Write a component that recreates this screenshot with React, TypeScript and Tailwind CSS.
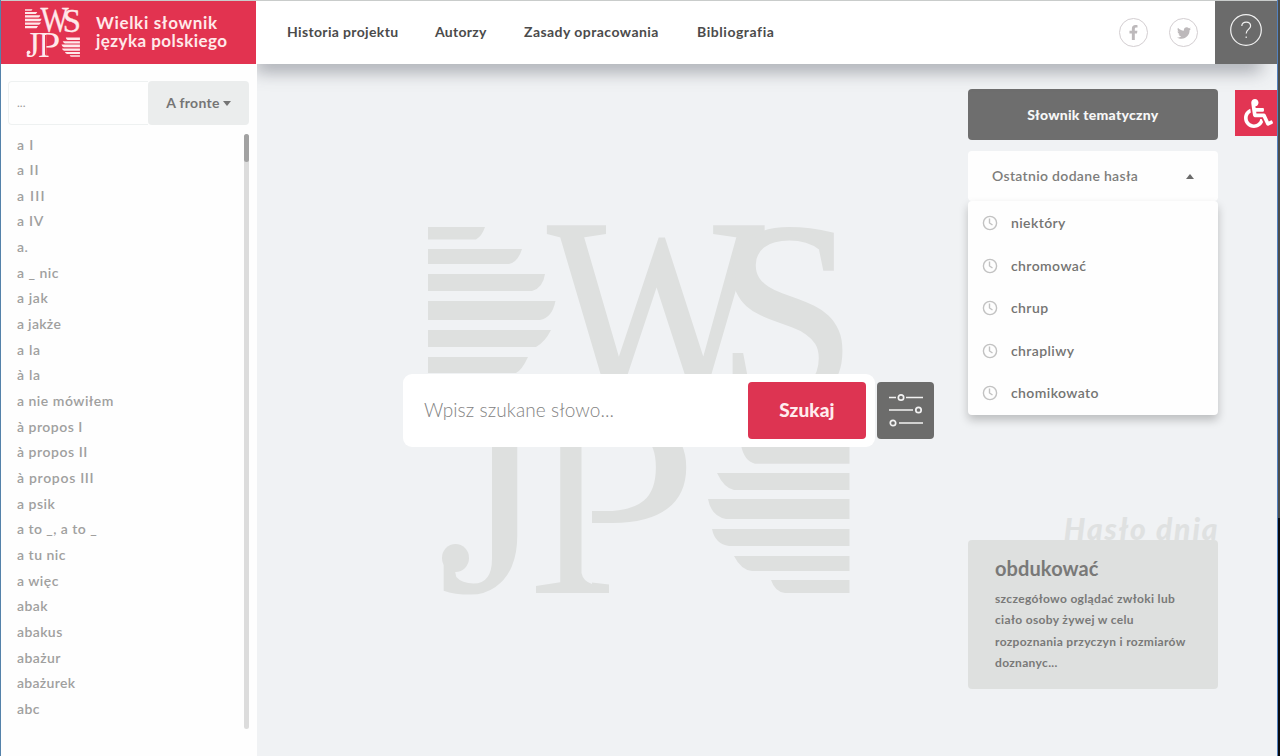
import React from "react";
import { FaWheelchair, FaFacebookF, FaTwitter } from "react-icons/fa";

const entries: [string, string][] = [
  ["a I", "tracking-[0.9px]"],
  ["a II", "tracking-[1px]"],
  ["a III", "tracking-[1.200px]"],
  ["a IV", "tracking-[0.7px]"],
  ["a.", "tracking-[0.5px]"],
  ["a _ nic", "tracking-[0.5px]"],
  ["a jak", "tracking-[0.6px]"],
  ["a jakże", "tracking-[0.3px]"],
  ["a la", "tracking-[0.7px]"],
  ["à la", "tracking-[0.7px]"],
  ["a nie mówiłem", "tracking-[0.5px]"],
  ["à propos I", "tracking-[0.5px]"],
  ["à propos II", "tracking-[0.55px]"],
  ["à propos III", "tracking-[0.7px]"],
  ["a psik", "tracking-[0.5px]"],
  ["a to _, a to _", "tracking-[0.45px]"],
  ["a tu nic", "tracking-[0.5px]"],
  ["a więc", "tracking-[0.5px]"],
  ["abak", "tracking-[0.4px]"],
  ["abakus", "tracking-[0.4px]"],
  ["abażur", "tracking-[0.4px]"],
  ["abażurek", "tracking-[0.3px]"],
  ["abc", "tracking-[0.4px]"],
];

const recent = ["niektóry", "chromować", "chrup", "chrapliwy", "chomikowato"];

function Logo({ className }: { className: string }) {
  return (
    <svg viewBox="428 226 422 368" className={className} fill="currentColor" preserveAspectRatio="none" overflow="visible">
      <defs>
        <clipPath id="open-bowl">
          <path d="M500 390H700V560H609V600H500ZM581.500 425V573Q583 581 592 584V425Z" clipRule="evenodd" />
        </clipPath>
      </defs>
      <path d="M428 227H485Q482 236 476 239.500H428ZM428 249H522Q518 262 509 264H428ZM428 274H545Q543 288 532 291H428ZM428 301H555.500Q552 318 540 320H428ZM428 330H551Q545 342 536 347H428ZM428 357H528Q522 370 516 373H428Z" />
      <path d="M849.500 463.700H755Q744 461 741 445H849.500ZM849.500 490H734Q724 488 717 473H849.500ZM849.500 519H726Q711 516 708 499H849.500ZM849.500 546H729Q715 544 712 529H849.500ZM849.500 571H752Q741 570 734 556H849.500ZM849.500 593H785Q775 592 771 580H849.500Z" />
      <g fontFamily="'Liberation Serif', serif" fontSize="267" stroke="currentColor">
        <text transform="translate(547.500 401) scale(.86 1)" strokeWidth="2">W</text>
        <text transform="translate(717 400) scale(.94 .97)" strokeWidth="3">S</text>
        <text transform="translate(438 592) scale(1.01 1)" strokeWidth="0">J</text>
        <g clipPath="url(#open-bowl)">
          <text transform="translate(525 593) scale(1.170 1.020)" strokeWidth="0">P</text>
        </g>
      </g>
      <ellipse cx="455.500" cy="558" rx="13.500" ry="14" />
    </svg>
  );
}

function ClockIcon() {
  return (
    <svg viewBox="0 0 16 16" className="h-4 w-4 text-[#c2c2c2]" fill="none" stroke="currentColor" strokeWidth="1.400">
      <circle cx="8" cy="8" r="6.600" />
      <path d="M7.500 3.500V8L10.500 10" />
    </svg>
  );
}

function Header() {
  return (
    <header className="relative z-30 flex h-[64px] shrink-0 border-t border-[#c9cccb] bg-white">
      <div className="relative z-10 flex w-[255px] shrink-0 items-center bg-[#e23350] pl-[24px] text-[#ffe9ea]">
        <Logo className="h-[48px] w-[55px]" />
        <div className="-mt-px ml-4 whitespace-nowrap text-[17px] font-bold leading-[18px]">
          <div className="tracking-[0.68px]">Wielki słownik</div>
          <div className="tracking-[0.46px]">języka polskiego</div>
        </div>
      </div>
      <div className="ml-px flex min-w-0 flex-1 items-center">
        <nav className="-mt-px flex flex-1 items-center whitespace-nowrap pl-[30px] text-sm font-bold text-[#4b4b4b]">
          <a className="w-[148px] tracking-[0.35px]">Historia projektu</a>
          <a className="w-[89px] tracking-[0.3px]">Autorzy</a>
          <a className="w-[173px] tracking-[0.45px]">Zasady opracowania</a>
          <a className="tracking-[0.55px]">Bibliografia</a>
        </nav>
        <div className="mr-[17px] flex gap-[21px] text-[#bdb9bb]">
          <span className="flex h-[29px] w-[29px] items-center justify-center rounded-full border border-[#d3ced1]">
            <FaFacebookF size={15} />
          </span>
          <span className="flex h-[29px] w-[29px] items-center justify-center rounded-full border border-[#d3ced1]">
            <FaTwitter size={14} />
          </span>
        </div>
        <div className="flex h-full w-[62px] justify-center bg-[#6b6b6b] pt-[13px]">
          <svg viewBox="0 0 32 32" className="h-8 w-8" fill="none" stroke="#f2f2f2" strokeWidth="1.200">
            <circle cx="16" cy="16" r="15.300" />
            <path d="M11.800 12C11.800 6.700 20.600 6.800 20.600 12C20.600 15.200 16.200 15.200 16.200 19.500M16.200 22.500V24" />
          </svg>
        </div>
      </div>
    </header>
  );
}

function Sidebar() {
  return (
    <aside className="relative z-20 flex w-[256px] shrink-0 flex-col bg-[#fefefe]">
      <div className="ml-[7px] mt-[17px] flex h-[44px] w-[241px]">
        <div className="flex flex-1 items-center rounded-l border border-r-0 border-[#eef1f1] pl-2 text-xs text-[#9a9a9a]">
          ...
        </div>
        <button className="flex w-[101px] items-center justify-center gap-[3px] rounded bg-[#ebeded] text-sm font-bold tracking-[0.3px] text-[#757575]">
          <span>A fronte</span>
          <svg viewBox="0 0 8 5" className="h-[5px] w-2" fill="currentColor">
            <path d="M0 0H8L4 5Z" />
          </svg>
        </button>
      </div>
      <div className="mt-[7px] flex">
        <ul className="-mt-[0.5px] w-[243px] pl-4 text-sm font-semibold leading-[25.650px] text-[#a0a09e]">
          {entries.map(([word, spacing]) => (
            <li key={word} className={spacing}>
              {word}
            </li>
          ))}
        </ul>
        <div className="mt-[2px] h-[595px] w-[5px] rounded-full bg-[#dcdcdc]">
          <div className="h-[28px] w-full rounded-full bg-[#a2a2a2]" />
        </div>
      </div>
    </aside>
  );
}

function SearchArea() {
  return (
    <div className="relative ml-[146px] mt-[162px] h-[370px] w-[531px] shrink-0">
      <div className="pl-[25px]">
        <Logo className="h-[368px] w-[422px] text-[#dee0df]" />
      </div>
      <div className="absolute left-0 top-[148px] flex h-[73px] items-center">
        <div className="flex h-full w-[472px] items-center rounded-[9px] bg-white pl-[21px] pr-[9px]">
          <span className="-mt-px flex-1 text-[19px] font-light tracking-[0.1px] text-[#828282]">Wpisz szukane słowo...</span>
          <button className="h-[57px] w-[118px] rounded bg-[#dd3452] pb-px text-[19px] font-black tracking-[0.1px] text-[#ffecee]">Szukaj</button>
        </div>
        <button className="ml-[2px] flex h-[57px] w-[57px] items-center justify-center rounded bg-[#6c6c6b] pb-[2px]">
          <svg viewBox="0 0 34 34" className="h-[34px] w-[34px]" fill="none" stroke="#f2f2f2" strokeWidth="1.700">
            <path d="M0 4.500H7M17 4.500H34M0 17H24M10 30H34" />
            <circle cx="12" cy="4.500" r="2.700" />
            <circle cx="29.500" cy="17" r="2.700" />
            <circle cx="4" cy="30" r="2.700" />
          </svg>
        </button>
      </div>
    </div>
  );
}

function RightColumn() {
  return (
    <div className="ml-[34px] mt-[25px] w-[249.500px] shrink-0">
      <button className="block h-[51px] w-full rounded bg-[#6e6e6e] text-sm font-black tracking-[0.25px] text-[#f7f7f7]">
        Słownik tematyczny
      </button>
      <div className="mt-[11px] flex h-[50px] items-center justify-between rounded bg-[#fefefe] pl-6 pr-[24px] text-sm font-semibold text-[#7d7d7b]">
        <span className="tracking-[0.32px]">Ostatnio dodane hasła</span>
        <svg viewBox="0 0 8 5" className="h-[5px] w-2" fill="#6b6b6b">
          <path d="M0 5H8L4 0Z" />
        </svg>
      </div>
      <ul className="h-[214px] rounded bg-[#fefefe] pt-px text-sm font-semibold text-[#747472] shadow-[0_5px_10px_rgba(0,0,0,0.22)]">
        {recent.map((word) => (
          <li key={word} className="flex h-[42.500px] items-center pl-[14px]">
            <ClockIcon />
            <span className="ml-[13px] tracking-[0.4px]">{word}</span>
          </li>
        ))}
      </ul>
      <div className="mt-[94px] flex h-[31px] justify-end overflow-visible whitespace-nowrap text-[30px] font-black italic leading-[38px] tracking-[1.900px] text-[#dfe1e1]">
        <span className="-mr-[2px]">Hasło dnia</span>
      </div>
      <section className="relative h-[149px] rounded bg-[#dee0df] pl-[27px] pt-[14px] font-bold text-[#797978]">
        <h2 className="text-[20px] leading-[28px] tracking-[0.1px]">obdukować</h2>
        <p className="mt-[6px] whitespace-nowrap text-[12px] leading-[21.300px] tracking-[0.33px]">
          szczegółowo oglądać zwłoki lub
          <br />
          ciało osoby żywej w celu
          <br />
          rozpoznania przyczyn i rozmiarów
          <br />
          doznanyc...
        </p>
      </section>
    </div>
  );
}

export default function App() {
  return (
    <div className="flex h-[756px] w-[1280px] overflow-hidden bg-[#f0f2f4] font-['Lato','Liberation_Sans',sans-serif]">
      <div className="w-px shrink-0 bg-[#5482aa]" />
      <div className="flex w-[1276px] shrink-0 flex-col overflow-hidden">
        <Header />
        <div className="flex min-h-0 flex-1">
          <Sidebar />
          <main className="relative flex min-w-0 flex-1 items-start">
            <div className="absolute -top-[10px] left-0 h-[10px] w-[1002px] shadow-[0_4px_18px_2px_rgba(70,72,85,0.55)]" />
            <SearchArea />
            <RightColumn />
            <button aria-label="Dostępność" className="ml-[17.500px] mt-[26px] flex h-[46px] w-[42px] shrink-0 items-center justify-center bg-[#e23553] pl-1 text-white">
              <FaWheelchair size={29} />
            </button>
          </main>
        </div>
      </div>
      <div className="w-px shrink-0 bg-[#5482c0]" />
      <div className="flex w-[2px] shrink-0 flex-col bg-[#08090d]">
        <div className="h-[518px] bg-[#4a4d4c]" />
      </div>
    </div>
  );
}
